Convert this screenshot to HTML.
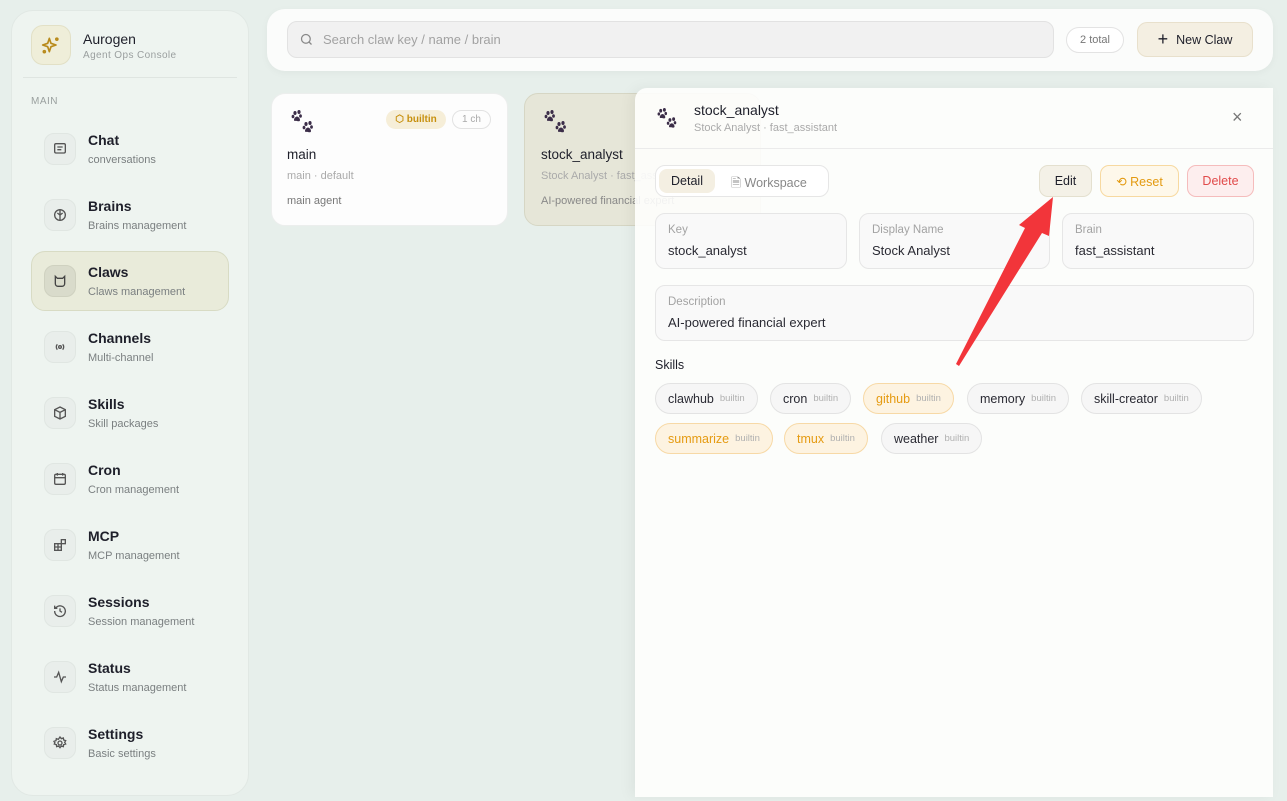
<!DOCTYPE html><html><head><style>
*{box-sizing:border-box;margin:0;padding:0}
body{width:1287px;height:801px;background:#e7efeb;font-family:"Liberation Sans",sans-serif;position:relative;overflow:hidden;color:#1e1f2a}
.a{position:absolute}
.side{left:11px;top:10px;width:238px;height:786px;background:#eef4f0;border:1px solid #e1e8e4;border-radius:22px}
.ib{position:absolute;width:32px;height:32px;border-radius:10px;background:#e9eeeb;border:1px solid #e0e6e2;display:flex;align-items:center;justify-content:center}
.nt{position:absolute;left:88px;font-size:14px;font-weight:bold;color:#1e1f2a}
.ns{position:absolute;left:88px;font-size:11px;color:#7a7f80}
.card{position:absolute;border-radius:14px;width:237px;height:133px;top:93px}
.chip{position:absolute;height:31px;border-radius:16px;border:1px solid #e3e3e3;background:#f6f6f6;font-size:12.5px;color:#2a2a33;padding:0 12px;display:flex;align-items:center;white-space:nowrap}
.chip small{font-size:9.5px;color:#b0b0b0;margin-left:6px}
.chip.o{background:#fdf3e1;border-color:#f7d9a6;color:#e59b12}
.fld{position:absolute;top:213px;height:56px;border:1px solid #e6e6e6;border-radius:10px;background:#f9f9f9;padding:10px 12px}
.fl{font-size:11.5px;color:#a3a3a3}
.fv{font-size:13px;color:#2a2a33;margin-top:7px}
.btn{position:absolute;top:165px;height:32px;border-radius:9px;font-size:12.5px;display:flex;align-items:center;justify-content:center}
</style></head><body>
<svg width="0" height="0" style="position:absolute"><defs><g id="paw" fill="#3b2d48"><ellipse cx="4" cy="3" rx="1.6" ry="2"/><ellipse cx="8" cy="2" rx="1.6" ry="2"/><ellipse cx="2" cy="6.5" rx="1.4" ry="1.8"/><ellipse cx="9.5" cy="6" rx="1.4" ry="1.8"/><path d="M3 10c0-2 2-3.5 3-3.5s3 1.5 3 3.5c0 1.5-1.5 1.5-3 1s-3 .5-3-1z"/></g></defs></svg>
<div class="a side"></div>
<div class="a" style="left:31px;top:25px;width:40px;height:40px;border-radius:12px;background:#efeed9;border:1px solid #e2e0c6;display:flex;align-items:center;justify-content:center"><svg width="20" height="20" viewBox="0 0 24 24" fill="none" stroke="#b88a1a" stroke-width="2" stroke-linejoin="round"><path d="M10 4 L12 10 L18 12 L12 14 L10 20 L8 14 L2 12 L8 10Z"/><circle cx="19" cy="5" r="1.2"/><circle cx="4" cy="20" r="1.2"/></svg></div>
<div class="a" style="left:83px;top:31px;font-size:14px;color:#1e1f2a">Aurogen</div>
<div class="a" style="left:83px;top:50px;font-size:10px;color:#9a9f9f;letter-spacing:.4px">Agent Ops Console</div>
<div class="a" style="left:23px;top:77px;width:214px;height:1px;background:#dfe5e1"></div>
<div class="a" style="left:31px;top:96px;font-size:10px;color:#9aa09f;letter-spacing:.5px">MAIN</div>
<div class="a" style="left:31px;top:251px;width:198px;height:60px;border-radius:14px;background:#e9ebda;border:1px solid #d8dbc4"></div>

<div class="ib" style="left:44px;top:133px"><svg width="16" height="16" viewBox="0 0 24 24" fill="none" stroke="#555" stroke-width="2"><rect x="4" y="4" width="16" height="14" rx="2"/><path d="M8 9h8M8 13h6"/></svg></div>
<div class="nt" style="top:132px">Chat</div><div class="ns" style="top:154px">conversations</div>
<div class="ib" style="left:44px;top:199px"><svg width="16" height="16" viewBox="0 0 24 24" fill="none" stroke="#555" stroke-width="2"><circle cx="12" cy="12" r="8"/><path d="M12 4v16M8 9l4 3 4-3"/></svg></div>
<div class="nt" style="top:198px">Brains</div><div class="ns" style="top:220px">Brains management</div>
<div class="ib" style="left:44px;top:265px;background:#d9dbcb;border-color:#cfd1c0"><svg width="16" height="16" viewBox="0 0 24 24" fill="none" stroke="#444" stroke-width="2"><path d="M5 5l3 3h8l3-3v11a4 4 0 0 1-4 4H9a4 4 0 0 1-4-4z"/></svg></div>
<div class="nt" style="top:264px">Claws</div><div class="ns" style="top:286px">Claws management</div>
<div class="ib" style="left:44px;top:331px"><svg width="16" height="16" viewBox="0 0 24 24" fill="none" stroke="#555" stroke-width="2"><circle cx="12" cy="12" r="2"/><path d="M8 8a6 6 0 0 0 0 8M16 8a6 6 0 0 1 0 8"/></svg></div>
<div class="nt" style="top:330px">Channels</div><div class="ns" style="top:352px">Multi-channel</div>
<div class="ib" style="left:44px;top:397px"><svg width="16" height="16" viewBox="0 0 24 24" fill="none" stroke="#555" stroke-width="2"><path d="M12 3l8 4v10l-8 4-8-4V7z M4 7l8 4 8-4M12 11v10"/></svg></div>
<div class="nt" style="top:396px">Skills</div><div class="ns" style="top:418px">Skill packages</div>
<div class="ib" style="left:44px;top:463px"><svg width="16" height="16" viewBox="0 0 24 24" fill="none" stroke="#555" stroke-width="2"><rect x="4" y="5" width="16" height="15" rx="2"/><path d="M4 10h16M8 3v4M16 3v4"/></svg></div>
<div class="nt" style="top:462px">Cron</div><div class="ns" style="top:484px">Cron management</div>
<div class="ib" style="left:44px;top:529px"><svg width="16" height="16" viewBox="0 0 24 24" fill="none" stroke="#555" stroke-width="2"><rect x="4" y="10" width="10" height="10"/><path d="M4 15h10M9 10v10"/><rect x="14" y="4" width="6" height="6"/></svg></div>
<div class="nt" style="top:528px">MCP</div><div class="ns" style="top:550px">MCP management</div>
<div class="ib" style="left:44px;top:595px"><svg width="16" height="16" viewBox="0 0 24 24" fill="none" stroke="#555" stroke-width="2"><path d="M4 12a8 8 0 1 0 3-6L4 8M4 4v4h4M12 8v4l3 2"/></svg></div>
<div class="nt" style="top:594px">Sessions</div><div class="ns" style="top:616px">Session management</div>
<div class="ib" style="left:44px;top:661px"><svg width="16" height="16" viewBox="0 0 24 24" fill="none" stroke="#555" stroke-width="2"><path d="M3 12h4l3-7 4 14 3-7h4"/></svg></div>
<div class="nt" style="top:660px">Status</div><div class="ns" style="top:682px">Status management</div>
<div class="ib" style="left:44px;top:727px"><svg width="16" height="16" viewBox="0 0 24 24" fill="none" stroke="#555" stroke-width="2"><circle cx="12" cy="12" r="3"/><path d="M12 3l2 2.5 3-1 .5 3 3 1-1.5 2.5 1.5 2.5-3 1-.5 3-3-1-2 2.5-2-2.5-3 1-.5-3-3-1L4.5 12 3 9.5l3-1 .5-3 3 1z"/></svg></div>
<div class="nt" style="top:726px">Settings</div><div class="ns" style="top:748px">Basic settings</div>

<div class="a" style="left:267px;top:9px;width:1006px;height:62px;background:#fbfcfb;border-radius:18px;box-shadow:0 2px 8px rgba(0,0,0,.04)"></div>
<div class="a" style="left:287px;top:21px;width:767px;height:37px;background:#f1f1f1;border:1px solid #e2e2e2;border-radius:10px"></div>
<svg class="a" style="left:299px;top:32px" width="15" height="15" viewBox="0 0 24 24" fill="none" stroke="#888" stroke-width="2"><circle cx="11" cy="11" r="7"/><path d="M16 16l4 4"/></svg>
<div class="a" style="left:323px;top:32px;font-size:13px;color:#a2a2a2">Search claw key / name / brain</div>
<div class="a" style="left:1066px;top:27px;width:58px;height:26px;border:1px solid #e3e3e3;border-radius:13px;background:#fff;font-size:11px;color:#777;text-align:center;line-height:24px">2 total</div>
<div class="a" style="left:1137px;top:22px;width:116px;height:35px;border:1px solid #e8e0cc;border-radius:10px;background:#f4efe2;font-size:12.5px;color:#1e1f2a;display:flex;align-items:center;justify-content:center;gap:8px"><span style="font-size:18px;font-weight:300">+</span>New Claw</div>

<div class="card" style="left:271px;background:#fdfdfd;border:1px solid #eceeed"></div>
<svg class="a" style="left:291px;top:110px" width="26" height="26" viewBox="0 0 26 26"><use href="#paw"/><use href="#paw" x="11" y="11" transform="translate(0,0)"/></svg>
<div class="a" style="left:386px;top:110px;width:60px;height:19px;border-radius:10px;background:#f6eed8;color:#c7900f;font-size:10px;font-weight:bold;line-height:19px;text-align:center">⬡ builtin</div>
<div class="a" style="left:452px;top:110px;width:39px;height:19px;border-radius:10px;border:1px solid #e2e2e2;color:#aaa;font-size:10px;line-height:17px;text-align:center">1 ch</div>
<div class="a" style="left:287px;top:147px;font-size:13.5px">main</div>
<div class="a" style="left:287px;top:170px;font-size:11px;color:#aaa">main · default</div>
<div class="a" style="left:287px;top:195px;font-size:11px;color:#777">main agent</div>

<div class="card" style="left:524px;background:#e6e6d8;border:1px solid #d6d6c4"></div>
<svg class="a" style="left:544px;top:110px" width="26" height="26" viewBox="0 0 26 26"><use href="#paw"/><use href="#paw" x="11" y="11"/></svg>
<div class="a" style="left:541px;top:147px;font-size:13.5px">stock_analyst</div>
<div class="a" style="left:541px;top:170px;font-size:11px;color:#aaa">Stock Analyst · fast_assistant</div>
<div class="a" style="left:541px;top:195px;font-size:11px;color:#888">AI-powered financial expert</div>

<div class="a" style="left:635px;top:88px;width:638px;height:709px;background:rgba(254,254,253,.9);border-radius:12px 0 0 0;box-shadow:-4px 0 14px rgba(0,0,0,.05)"></div>
<svg class="a" style="left:657px;top:108px" width="24" height="24" viewBox="0 0 26 26"><use href="#paw"/><use href="#paw" x="10" y="10"/></svg>
<div class="a" style="left:694px;top:102px;font-size:14px">stock_analyst</div>
<div class="a" style="left:694px;top:122px;font-size:11px;color:#aaa">Stock Analyst · fast_assistant</div>
<div class="a" style="left:1232px;top:107px;font-size:18px;color:#777;line-height:20px">×</div>
<div class="a" style="left:635px;top:148px;width:638px;height:1px;background:#ebebeb"></div>
<div class="a" style="left:655px;top:165px;width:174px;height:32px;border:1px solid #e6e6e6;border-radius:10px;background:#fff"></div>
<div class="a" style="left:659px;top:169px;width:56px;height:24px;border-radius:8px;background:#f4efe2;font-size:12.5px;line-height:24px;text-align:center">Detail</div>
<div class="a" style="left:731px;top:174px;font-size:12.5px;color:#888">🗎 Workspace</div>
<div class="btn" style="left:1039px;width:53px;background:#f4f1e7;border:1px solid #e4e0cf">Edit</div>
<div class="btn" style="left:1100px;width:79px;background:#fef8ea;border:1px solid #f7d9a0;color:#e39a10">⟲ Reset</div>
<div class="btn" style="left:1187px;width:67px;background:#fdeeee;border:1px solid #f5bcbc;color:#e14a4a">Delete</div>
<div class="fld" style="left:655px;width:192px"><div class="fl">Key</div><div class="fv">stock_analyst</div></div>
<div class="fld" style="left:859px;width:191px"><div class="fl">Display Name</div><div class="fv">Stock Analyst</div></div>
<div class="fld" style="left:1062px;width:192px"><div class="fl">Brain</div><div class="fv">fast_assistant</div></div>
<div class="fld" style="left:655px;top:285px;width:599px"><div class="fl">Description</div><div class="fv">AI-powered financial expert</div></div>
<div class="a" style="left:655px;top:358px;font-size:12.5px">Skills</div>
<div class="chip" style="left:655px;top:383px">clawhub<small>builtin</small></div>
<div class="chip" style="left:770px;top:383px">cron<small>builtin</small></div>
<div class="chip o" style="left:863px;top:383px">github<small>builtin</small></div>
<div class="chip" style="left:967px;top:383px">memory<small>builtin</small></div>
<div class="chip" style="left:1081px;top:383px">skill-creator<small>builtin</small></div>
<div class="chip o" style="left:655px;top:423px">summarize<small>builtin</small></div>
<div class="chip o" style="left:784px;top:423px">tmux<small>builtin</small></div>
<div class="chip" style="left:881px;top:423px">weather<small>builtin</small></div>

<svg class="a" style="left:0;top:0" width="1287" height="801"><polygon points="956,364 1025,228 1019,225 1053,197 1049,236 1042,233 959,366" fill="#f2353a"/></svg>
</body></html>
